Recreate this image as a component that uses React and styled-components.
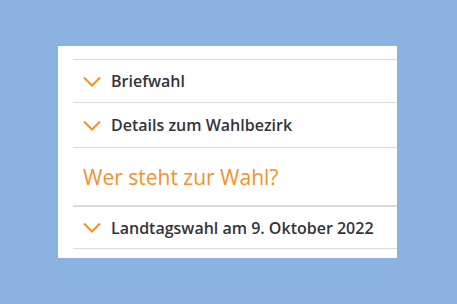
import React from "react";
import styled, { createGlobalStyle } from "styled-components";

const GlobalStyle = createGlobalStyle`
  body {
    margin: 0;
    background: #8cb2e2;
    font-family: "Open Sans", "Noto Sans", sans-serif;
  }
`;

const Page = styled.div`
  width: 457px;
  height: 304px;
  padding: 46px 0 0 58px;
  box-sizing: border-box;
`;

const Panel = styled.div`
  width: 339px;
  height: 212px;
  background: #ffffff;
  padding: 13px 0 0 15px;
  box-sizing: border-box;
`;

const List = styled.div`
  display: flex;
  flex-direction: column;
  border-bottom: 1px solid #dcdbd5;
`;

const Row = styled.div`
  height: ${(p) => p.h}px;
  display: flex;
  align-items: center;
  gap: 10px;
  padding-left: 10px;
  border-top: ${(p) => (p.thick ? 2 : 1)}px solid #dcdbd5;
  box-sizing: border-box;
  font-size: 16px;
  font-weight: 600;
  color: #34343c;
`;

const Heading = styled.div`
  height: 58px;
  display: flex;
  align-items: center;
  padding-left: 10px;
  border-top: 1px solid #dcdbd5;
  box-sizing: border-box;
  font-size: 21px;
  font-weight: 400;
  color: #f5912a;
`;

const Chevron = () => (
  <svg width="18" height="11" viewBox="0 0 18 11">
    <path d="M1 1.5 L9 9.5 L17 1.5" fill="none" stroke="#f6901e" strokeWidth="2" />
  </svg>
);

const items = [
  { label: "Briefwahl", h: 43 },
  { label: "Details zum Wahlbezirk", h: 45 },
];

export default function App() {
  return (
    <Page>
      <GlobalStyle />
      <Panel>
        <List>
          {items.map((it) => (
            <Row key={it.label} h={it.h}>
              <Chevron />
              {it.label}
            </Row>
          ))}
          <Heading>Wer steht zur Wahl?</Heading>
          <Row h={43} thick>
            <Chevron />
            Landtagswahl am 9. Oktober 2022
          </Row>
        </List>
      </Panel>
    </Page>
  );
}
